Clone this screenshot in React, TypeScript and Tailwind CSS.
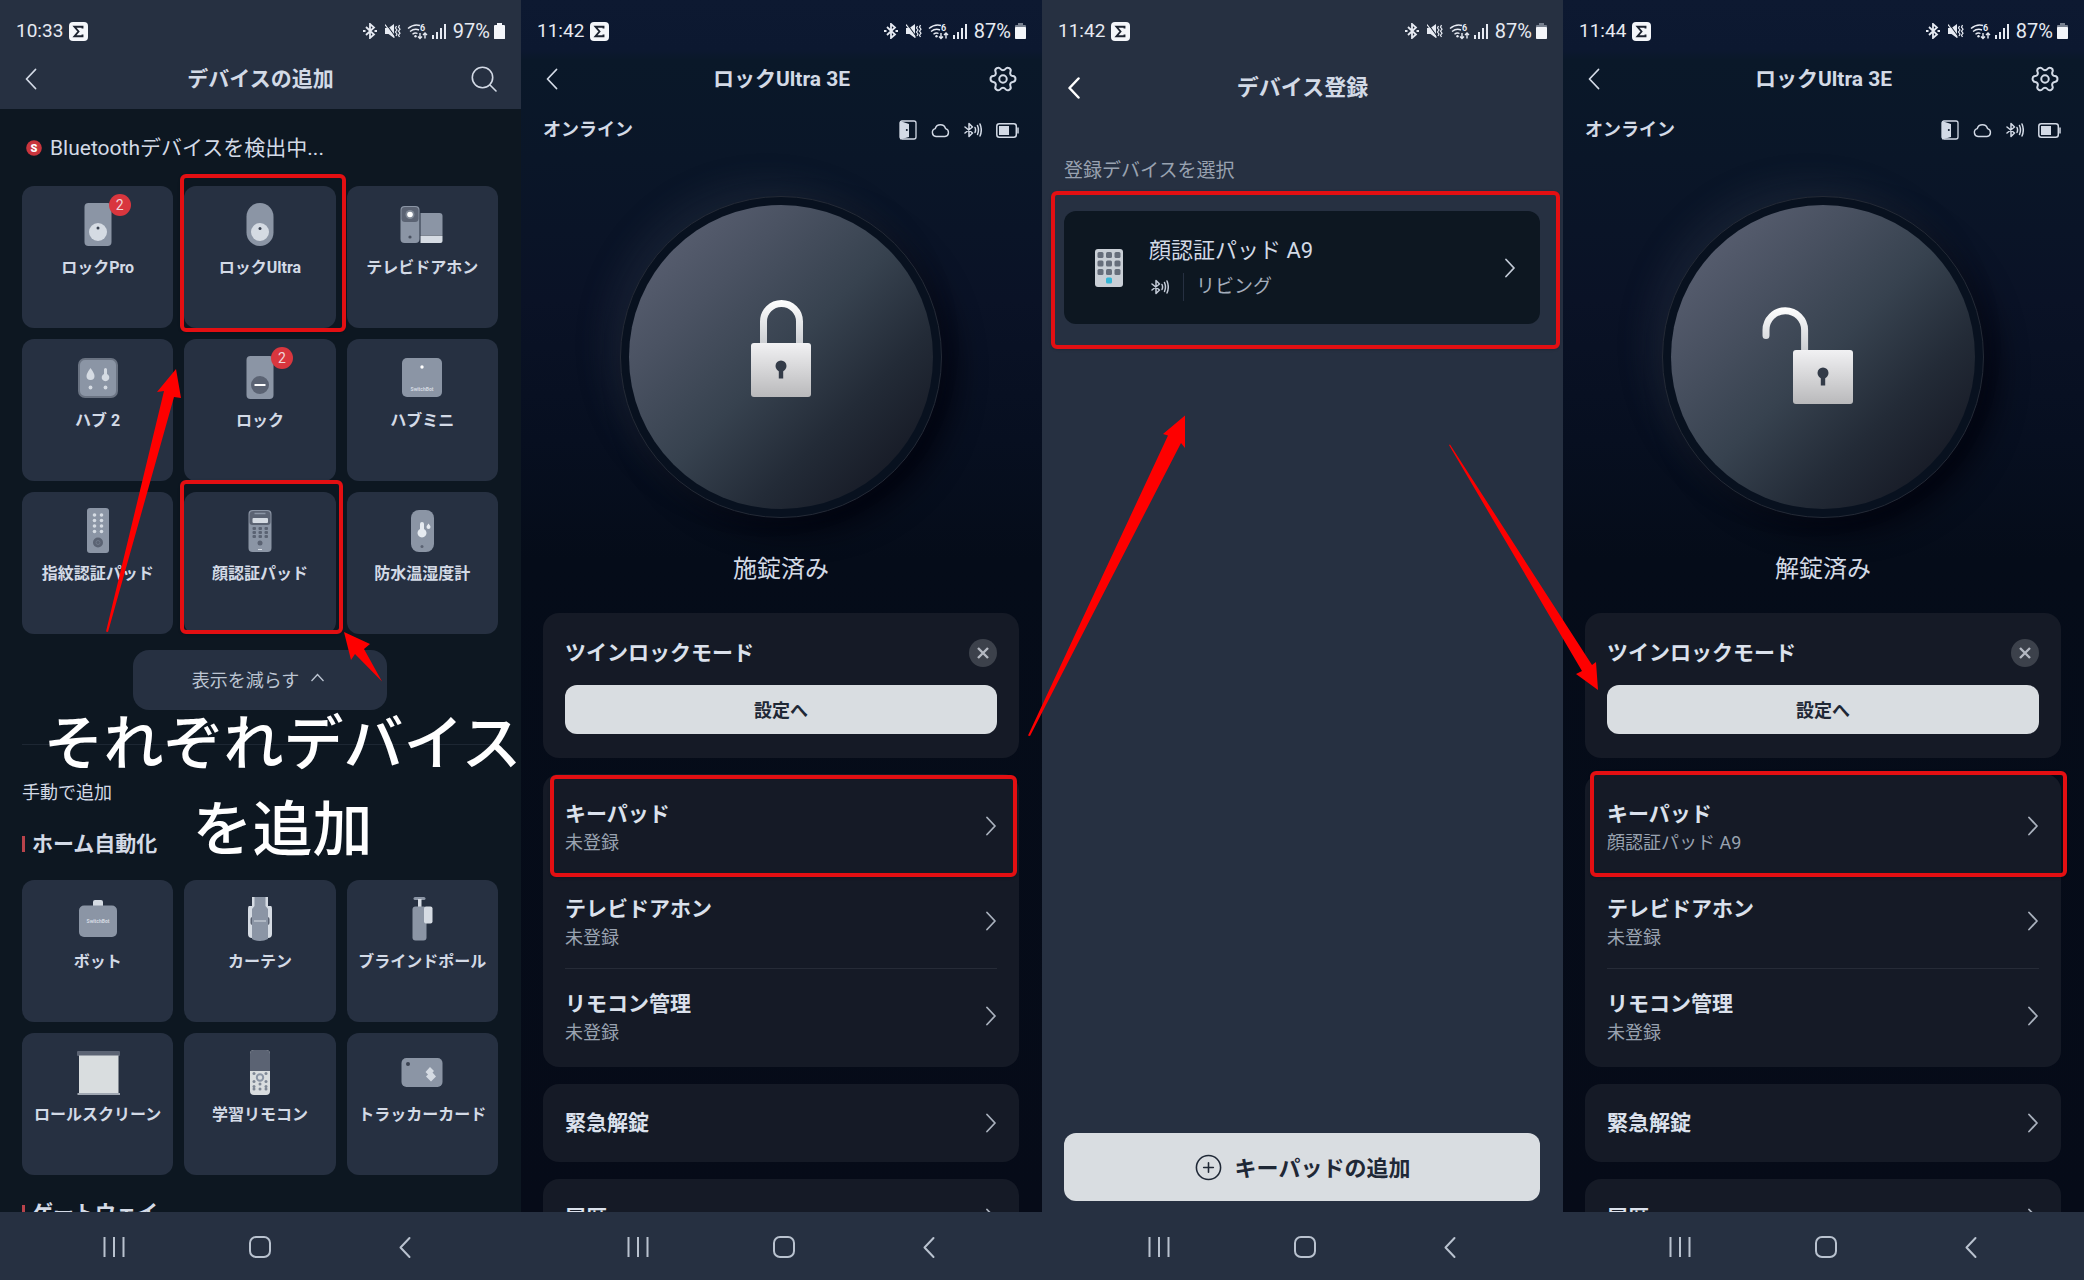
import React from "react";
import clsx from "clsx";
import { CirclePlus, Settings } from "lucide-react";

type IconProps = { className?: string };

const GREY = "#8b95a5";
const LIGHT = "#d5dbe3";
const DARK = "#5b6373";

const Chevron = ({ className }: IconProps) => (
  <svg viewBox="0 0 12 20" fill="none" stroke="currentColor" strokeLinecap="round" strokeLinejoin="round" className={className} aria-hidden="true">
    <path d="M2 1.500l8 8.500-8 8.500" />
  </svg>
);

const ChevronBack = ({ className }: IconProps) => (
  <svg viewBox="0 0 12 22" fill="none" stroke="currentColor" strokeLinecap="round" strokeLinejoin="round" className={className} aria-hidden="true">
    <path d="M10.500 1.500L1.500 11l9 9.500" />
  </svg>
);

const BluetoothWaves = ({ className }: IconProps) => (
  <svg viewBox="0 0 18 16" fill="none" stroke="currentColor" strokeWidth="1.5" strokeLinecap="round" strokeLinejoin="round" className={className} aria-hidden="true">
    <path d="M1 5l7.500 6L5 14.500v-13L8.500 5 1 11M11 5.500c.8 1.700.8 3.300 0 5M13.500 3.500c1.300 3 1.300 6 0 9M16 2c1.700 4 1.700 8 0 12" />
  </svg>
);

const StatusBar = ({ time, battery }: { time: string; battery: number }) => (
  <div className="flex h-[38px] items-center justify-between px-4 text-[20px] leading-6 text-[#e6eaf2]">
    <div className="flex items-center gap-[6px]">
      <span className="text-[19px]">{time}</span>
      <svg viewBox="0 0 19 19" className="h-[19px] w-[19px]" aria-hidden="true">
        <rect width="19" height="19" rx="4" fill="#f4f6fa" />
        <path d="M13.500 6.500V4.800H5.500L9.500 9.500l-4 4.700h8v-1.700" fill="none" stroke="#1c2330" strokeWidth="1.900" />
      </svg>
    </div>
    <div className="flex items-center">
      <svg viewBox="0 0 14 16" className="h-4 w-[14px]" fill="none" stroke="currentColor" strokeWidth="1.800" aria-hidden="true">
        <path d="M3 4l8 7.500L7 15V1l4 3.500L3 12" />
        <path d="M0 8h2.500M11.500 8H14" />
      </svg>
      <svg viewBox="0 0 16 16" className="ml-2 h-4 w-4" fill="currentColor" aria-hidden="true">
        <path d="M0 5h3.500L9 1v14l-5.500-4H0z" />
        <path d="M1 1l10 13.500" stroke="#1e2838" strokeWidth="1.200" />
        <path d="M0 1.500l9.500 13" stroke="currentColor" strokeWidth="1.200" />
        <path d="M11.500 3l-1 2 1.500 2-1.500 2 1.500 2-1 2M14.500 2l-1 2.200 1.500 2-1.500 2 1.500 2-1.500 2 1 1.800" fill="none" stroke="currentColor" strokeWidth="1.200" />
      </svg>
      <svg viewBox="0 0 21 17" className="ml-[6px] h-[17px] w-[21px]" fill="none" stroke="currentColor" strokeWidth="1.400" aria-hidden="true">
        <path d="M1 5.500Q7 .5 13 2.500M3 8.500q4.500-3.500 9-1.500M5.500 11.200q2.500-2 5-.7" />
        <circle cx="8.500" cy="13.200" r="1.200" fill="currentColor" stroke="none" />
        <path d="M13 10v5.500m-2-2l2 2 2-2M18 15.500V10m-2 2l2-2 2 2" />
        <text x="13" y="8" fontSize="9" fontWeight="700" fill="currentColor" stroke="none">6</text>
      </svg>
      <svg viewBox="0 0 15 15" className="ml-1 h-[15px] w-[15px]" fill="currentColor" aria-hidden="true">
        <rect x="0" y="11" width="2" height="4" />
        <rect x="4" y="8" width="2" height="7" />
        <rect x="8" y="4" width="2" height="11" />
        <rect x="12" y="0" width="2" height="15" />
      </svg>
      <span className="ml-[6px]">{battery}%</span>
      <svg viewBox="0 0 11 16" className="ml-1 h-4 w-[11px]" aria-hidden="true">
        <path d="M3 0h5v2h2q1 0 1 1v12q0 1-1 1H1q-1 0-1-1V3q0-1 1-1h2z" fill={battery > 90 ? "#f4f6fa" : "#77808f"} />
        <rect y={battery > 90 ? 3 : 4} width="11" height={battery > 90 ? 13 : 12} rx="1" fill="#f4f6fa" />
      </svg>
    </div>
  </div>
);

const NavBar = ({ className }: IconProps) => (
  <nav className={clsx("z-10 grid h-[68px] shrink-0 grid-cols-[1fr_72px_1fr] items-center bg-[#263041] pt-[2px] text-[#b9c2cf]", className)}>
    <button aria-label="最近" className="ml-auto mr-[99px]">
      <svg viewBox="0 0 22 20" className="h-5 w-[22px]" stroke="currentColor" strokeWidth="2" aria-hidden="true">
        <path d="M1.500 0v20M11 0v20M20.500 0v20" />
      </svg>
    </button>
    <button aria-label="ホーム" className="mx-auto">
      <svg viewBox="0 0 22 22" className="h-[22px] w-[22px]" fill="none" stroke="currentColor" strokeWidth="2" aria-hidden="true">
        <rect x="1" y="1" width="20" height="20" rx="6" />
      </svg>
    </button>
    <button aria-label="戻る" className="ml-[103px] mr-auto">
      <ChevronBack className="h-[23px] w-3 stroke-2" />
    </button>
  </nav>
);

// Red frame drawn over the thing it marks
const Frame = ({ className }: IconProps) => (
  <span className={clsx("pointer-events-none absolute z-20 rounded-md border-4 border-[#e30f12] shadow-sm", className)} />
);

const icons: Record<string, React.ReactNode> = {
  lockPro: (
    <>
      <rect x="10.500" y="3" width="27" height="43" rx="4" fill={GREY} />
      <circle cx="24" cy="32" r="9" fill={LIGHT} />
      <circle cx="24" cy="28" r="1.500" fill="#3b4352" />
    </>
  ),
  lockUltra: (
    <>
      <rect x="10.500" y="3" width="27" height="43" rx="13.500" fill={GREY} />
      <circle cx="24" cy="32" r="9" fill={LIGHT} />
      <circle cx="24" cy="28.500" r="1.500" fill="#3b4352" />
    </>
  ),
  doorphone: (
    <>
      <rect x="2.500" y="6" width="19" height="37" rx="4" fill={GREY} />
      <rect x="3.500" y="7" width="17" height="15" rx="3.500" fill={DARK} />
      <circle cx="12" cy="14.500" r="4.500" fill="#808997" />
      <circle cx="12" cy="14.500" r="2.800" fill="#fff" />
      <circle cx="12" cy="37" r="1.600" fill="#4a5261" />
      <path d="M22.500 13h19q3 0 3 3v19h-22z" fill={GREY} />
      <path d="M22.500 35.500h22V41q0 2-2 2h-20z" fill={LIGHT} />
    </>
  ),
  hub2: (
    <>
      <rect x="5" y="6" width="38" height="38" rx="6" fill={GREY} stroke="#6a7382" strokeWidth="2" />
      <path d="M16.500 15q4 5.500 4 8a4 4 0 0 1-8 0q0-2.500 4-8z" fill={LIGHT} />
      <path d="M30 16.500a1.500 1.500 0 0 1 3 0V21a3.800 3.800 0 1 1-3 0z" fill={LIGHT} />
      <circle cx="16.500" cy="34.500" r="1.900" fill={LIGHT} />
      <circle cx="31.500" cy="34.500" r="1.900" fill={LIGHT} />
    </>
  ),
  lock: (
    <>
      <rect x="10.500" y="3" width="27" height="43" rx="4" fill={GREY} />
      <circle cx="24" cy="32" r="9" fill={DARK} />
      <path d="M18.500 32h11" stroke="#fff" strokeWidth="2" />
    </>
  ),
  hubMini: (
    <>
      <rect x="4" y="5" width="40" height="39" rx="5" fill={GREY} />
      <circle cx="24" cy="14" r="1.700" fill="#fff" />
      <text x="24" y="38" fontSize="5" fontWeight="700" textAnchor="middle" fill={LIGHT}>SwitchBot</text>
    </>
  ),
  fingerPad: (
    <>
      <rect x="13" y="2" width="22" height="45" rx="3" fill={GREY} />
      {[9, 14.5, 20, 25.5].map((y) => (
        <React.Fragment key={y}>
          <circle cx="20.500" cy={y} r="1.800" fill={LIGHT} />
          <circle cx="27.500" cy={y} r="1.800" fill={LIGHT} />
        </React.Fragment>
      ))}
      <circle cx="24" cy="36.500" r="5" fill={DARK} />
      <circle cx="24" cy="36.500" r="2" fill="none" stroke="#6f7888" />
    </>
  ),
  facePad: (
    <>
      <rect x="12.500" y="4" width="23" height="42" rx="4" fill={GREY} />
      <path d="M13.500 9q0-4 4-4h13q4 0 4 4v7q0 3-3 3h-15q-3 0-3-3z" fill={DARK} />
      <path d="M18.500 7.500h11" stroke={GREY} strokeWidth="1.500" />
      <rect x="16.500" y="12" width="15.500" height="5" rx="1" fill={LIGHT} />
      {[22, 26, 30].map((y) => (
        <React.Fragment key={y}>
          <rect x="16.500" y={y - 1} width="3.500" height="3" rx="1" fill={DARK} />
          <rect x="22.500" y={y - 1} width="3.500" height="3" rx="1" fill={DARK} />
          <rect x="28.500" y={y - 1} width="3.500" height="3" rx="1" fill={DARK} />
        </React.Fragment>
      ))}
      <circle cx="24" cy="37" r="2.500" fill={DARK} />
      <path d="M22 43.500h4" stroke={LIGHT} />
    </>
  ),
  thermometer: (
    <>
      <rect x="13" y="4" width="23" height="42" rx="8" fill={GREY} />
      <path d="M22 18a2 2 0 0 1 4 0v5a4.500 4.500 0 1 1-4 0z" fill="#e6ebf1" />
      <path d="M30.500 17.500q2 2.500 2 3.500a2 2 0 0 1-4 0q0-1 2-3.500z" fill="#e6ebf1" />
      <circle cx="24" cy="40.500" r="1.500" fill={DARK} />
    </>
  ),
  bot: (
    <>
      <rect x="19" y="6" width="10" height="9" rx="2" fill={LIGHT} />
      <rect x="5" y="11.500" width="38" height="31.500" rx="5" fill={GREY} />
      <text x="24" y="29" fontSize="5" fontWeight="700" textAnchor="middle" fill={LIGHT}>SwitchBot</text>
    </>
  ),
  curtain: (
    <>
      <path d="M16 3h16v9h3q1 0 1 3v25q0 4-4 4H16q-4 0-4-4V15q0-3 1-3h3z" fill={LIGHT} />
      <rect x="14.500" y="23" width="19" height="8" rx="2" fill={DARK} />
      <path d="M18.500 3h11v9l2.500 3v30q-4 2-8 2t-8-2V15l2.500-3z" fill={GREY} />
      <path d="M18 27h12" stroke={LIGHT} />
    </>
  ),
  blind: (
    <>
      <rect x="15.500" y="3" width="12" height="3" rx="1.500" fill={GREY} />
      <rect x="20" y="5" width="3.500" height="8" fill={LIGHT} />
      <rect x="14.500" y="12.500" width="14" height="34" rx="3" fill={GREY} />
      <rect x="26" y="12.500" width="8.500" height="17" rx="2" fill={LIGHT} />
    </>
  ),
  roller: (
    <>
      <rect x="3" y="4" width="43" height="5" rx="1" fill={DARK} />
      <rect x="5" y="8.500" width="39.500" height="37.500" fill="#d9dddf" />
      <path d="M3.500 47H46" stroke="#a0a7b2" strokeWidth="2" />
    </>
  ),
  remote: (
    <>
      <rect x="14" y="3" width="20" height="45" rx="4" fill="#d9dddf" />
      <path d="M14 24V7q0-4 4-4h12q4 0 4 4v17z" fill={DARK} />
      <circle cx="24" cy="30.500" r="3.200" fill="none" stroke={GREY} strokeWidth="2" />
      {[
        [18, 26.5], [30, 26.5], [18, 34.5], [30, 34.5], [24, 37],
        [18, 39.5], [30, 39.5], [18, 42], [24, 42], [30, 42],
      ].map(([x, y]) => (
        <circle key={`${x}-${y}`} cx={x} cy={y} r="1.500" fill="#7e8795" />
      ))}
    </>
  ),
  tracker: (
    <>
      <rect x="3.500" y="11" width="41" height="29" rx="5" fill={GREY} />
      <circle cx="10" cy="17" r="2" fill="#3b4352" />
      <path d="M32 20l4 4-1.500 1.500 3.500 4-5 5-5-5 2-2-2.500-2.500z" fill={LIGHT} />
    </>
  ),
};

type Device = { icon: string; name: string; badge?: number; frame?: string };

const foundDevices: Device[] = [
  { icon: "lockPro", name: "ロックPro", badge: 2 },
  { icon: "lockUltra", name: "ロックUltra", frame: "-top-3 -bottom-1 -left-1 -right-[10px]" },
  { icon: "doorphone", name: "テレビドアホン" },
  { icon: "hub2", name: "ハブ 2" },
  { icon: "lock", name: "ロック", badge: 2 },
  { icon: "hubMini", name: "ハブミニ" },
  { icon: "fingerPad", name: "指紋認証パッド" },
  { icon: "facePad", name: "顔認証パッド", frame: "-top-3 bottom-0 -left-1 -right-[7px]" },
  { icon: "thermometer", name: "防水温湿度計" },
];

const homeDevices: Device[] = [
  { icon: "bot", name: "ボット" },
  { icon: "curtain", name: "カーテン" },
  { icon: "blind", name: "ブラインドポール" },
  { icon: "roller", name: "ロールスクリーン" },
  { icon: "remote", name: "学習リモコン" },
  { icon: "tracker", name: "トラッカーカード" },
];

const DeviceGrid = ({ devices }: { devices: Device[] }) => (
  <ul className="grid grid-cols-3 gap-[11px]">
    {devices.map((device) => (
      <li key={device.name} className="relative">
        <button className="flex h-[142px] w-full flex-col items-center rounded-xl bg-[#263041] pt-[14px]">
          <span className="relative">
            <svg viewBox="0 0 48 48" className="h-12 w-12" aria-hidden="true">
              {icons[device.icon]}
            </svg>
            {device.badge && (
              <span className="absolute -top-[6px] left-[35px] flex h-[22px] w-[22px] items-center justify-center rounded-full bg-[#d9363e] text-[14px] text-[#f0d5da]">
                {device.badge}
              </span>
            )}
          </span>
          <span className="mt-2 text-[16px] leading-6 font-bold whitespace-nowrap text-[#d3dae6]">{device.name}</span>
        </button>
        {device.frame && <Frame className={device.frame} />}
      </li>
    ))}
  </ul>
);

const SectionTitle = ({ children }: { children: React.ReactNode }) => (
  <h3 className="flex items-center gap-[7px] text-[21px] leading-6 font-bold text-[#d3dae6]">
    <span className="h-4 w-[3px] bg-[#b8434b]" />
    {children}
  </h3>
);

const AddDeviceScreen = () => (
  <section className="relative flex h-screen min-w-0 flex-col bg-[#0d1721]">
    <header className="bg-[#263041] pt-3 pb-px">
      <StatusBar time="10:33" battery={97} />
      <div className="grid h-[58px] grid-cols-[1fr_auto_1fr] items-center px-6 text-[#d3dae6]">
        <button aria-label="戻る" className="mr-auto pl-px">
          <ChevronBack className="h-[22px] w-3 stroke-[1.800px]" />
        </button>
        <h1 className="text-[21px] leading-8 font-bold">デバイスの追加</h1>
        <button aria-label="検索" className="ml-auto">
          <svg viewBox="0 0 26 26" className="h-[26px] w-[26px]" fill="none" stroke="currentColor" strokeWidth="1.600" strokeLinecap="round" aria-hidden="true">
            <circle cx="11.500" cy="11.500" r="10.200" />
            <path d="M19 19l6 6" />
          </svg>
        </button>
      </div>
    </header>
    <div className="min-h-0 flex-1 overflow-hidden pr-[23px] pl-[22px]">
      <div className="flex h-[77px] items-center gap-2 pl-1">
        <svg viewBox="0 0 16 16" className="h-4 w-4" aria-hidden="true">
          <circle cx="8" cy="8" r="7.800" fill="#c9353d" />
          <text x="8" y="11.800" fontSize="11" fontWeight="900" textAnchor="middle" fill="#fff">S</text>
        </svg>
        <h2 className="text-[21px] leading-8 text-[#d3dae6]">Bluetoothデバイスを検出中...</h2>
      </div>
      <DeviceGrid devices={foundDevices} />
      <button className="mx-auto mt-4 flex h-[60px] w-[254px] items-center justify-center gap-3 rounded-2xl bg-[#263041] pt-px pr-1 text-[18px] text-[#bcc5d2]">
        表示を減らす
        <svg viewBox="0 0 13 9" className="mb-[6px] h-[9px] w-[13px]" fill="none" stroke="currentColor" strokeWidth="1.300" aria-hidden="true">
          <path d="M.5 8l6-6.500 6 6.500" />
        </svg>
      </button>
      <hr className="mt-[34px] border-[#1d2733]" />
      <p className="mt-9 text-[18px] leading-6 text-[#d3dae6]">手動で追加</p>
      <div className="mt-[27px] mb-6">
        <SectionTitle>ホーム自動化</SectionTitle>
      </div>
      <DeviceGrid devices={homeDevices} />
      <div className="mt-[26px]">
        <SectionTitle>ゲートウェイ</SectionTitle>
      </div>
    </div>
    <NavBar className="pr-[2px]" />
    <p className="pointer-events-none absolute top-[702px] left-[calc(50%+22px)] z-30 -translate-x-1/2 text-center text-[60px] leading-[86px] font-medium whitespace-nowrap text-white">
      それぞれデバイス
      <br />
      を追加
    </p>
  </section>
);

const Padlock = ({ open }: { open: boolean }) => (
  <svg viewBox="0 3 100 108" className="h-[108px] w-[100px] overflow-visible" aria-hidden="true">
    <defs>
      <linearGradient id="lockBody" x1="0" y1="0" x2="0" y2="1">
        <stop offset="0" stopColor="#f1f1f3" />
        <stop offset="1" stopColor="#b9b9bb" />
      </linearGradient>
      <linearGradient id="shackle" x1="0" y1="0" x2="0" y2="50" gradientUnits="userSpaceOnUse">
        <stop offset="0" stopColor="#fff" />
        <stop offset="1" stopColor="#c4c7cc" />
      </linearGradient>
    </defs>
    <g transform={open ? "translate(0 7)" : undefined}>
      {open ? (
        <path d="M-7 28.500v-5.500a19.300 19.300 0 0 1 38.600 0v23" fill="none" stroke="url(#shackle)" strokeWidth="7" strokeLinecap="round" />
      ) : (
        <path d="M32.500 46V21.500a18 18 0 0 1 36 0V46" fill="none" stroke="url(#shackle)" strokeWidth="7" />
      )}
      <rect x="20" y="43" width="60" height="54" rx="3" fill="url(#lockBody)" />
      <circle cx="50" cy="66" r="5.500" fill="#333b48" />
      <rect x="47.800" y="67" width="4.400" height="11.500" fill="#333b48" />
    </g>
  </svg>
);

type LockRow = { title: string; sub: string; frame?: string };

const LockScreen = ({ time, state, open, rows }: { time: string; state: string; open: boolean; rows: LockRow[] }) => (
  <section className="flex h-screen min-w-0 flex-col bg-[linear-gradient(180deg,#0d1931_0px,#0c1830_50px,#0a1829_60px,#0a1628_160px,#0a1226_300px,#070f20_440px,#050c19_560px,#060b18_1212px)]">
    <div className="pt-3">
      <StatusBar time={time} battery={87} />
    </div>
    <header className="grid h-[58px] grid-cols-[1fr_auto_1fr] items-center px-6 text-[#d3dae6]">
      <button aria-label="戻る" className="mr-auto pl-px">
        <ChevronBack className="h-[22px] w-3 stroke-[1.800px]" />
      </button>
      <h1 className="text-[21px] leading-8 font-bold">ロックUltra 3E</h1>
      <button aria-label="設定" className="ml-auto">
        <Settings size={30} strokeWidth={1.6} className="rotate-90" />
      </button>
    </header>
    <div className="min-h-0 flex-1 overflow-hidden pr-[23px] pl-[22px]">
      <div className="flex h-11 items-center justify-between text-[#d3dae6]">
        <span className="text-[18px] leading-6 font-bold">オンライン</span>
        <div className="flex items-center gap-[14px]">
          <svg viewBox="0 0 18 20" className="h-5 w-[18px]" aria-hidden="true">
            <rect x="1" y="1" width="16" height="18" rx="2" fill="none" stroke="currentColor" strokeWidth="1.300" />
            <path d="M1 1l9 3v13l-9 2.500z" fill="currentColor" />
            <circle cx="7.800" cy="10" r="1" fill="#0a1628" />
          </svg>
          <svg viewBox="0 0 19 16" className="h-4 w-[19px]" fill="none" stroke="currentColor" strokeWidth="1.400" aria-hidden="true">
            <path d="M5 14.500a4 4 0 0 1-.8-7.800 5.400 5.400 0 0 1 10.400 0A4 4 0 0 1 14 14.500z" />
          </svg>
          <BluetoothWaves className="h-4 w-[18px]" />
          <svg viewBox="0 0 23 15" className="h-[15px] w-[23px]" fill="none" stroke="currentColor" strokeWidth="1.500" aria-hidden="true">
            <rect x=".8" y=".8" width="19.500" height="13.400" rx="2.500" />
            <path d="M22 4.500v6" />
            <rect x="3" y="3" width="10" height="9" fill="currentColor" stroke="none" />
          </svg>
        </div>
      </div>
      <button
        aria-label={state}
        className="mx-auto mt-11 flex h-[322px] w-[322px] items-center justify-center rounded-full border border-[#242a36] bg-[#08111f] shadow-[-14px_-12px_30px_rgba(50,58,76,0.3),14px_14px_28px_rgba(0,2,10,0.7)]"
      >
        <span className="flex h-[304px] w-[304px] items-center justify-center rounded-full bg-[linear-gradient(135deg,#5a6072_8%,#4a5262_28%,#37424f_50%,#232b37_70%,#141722_92%)]">
          <Padlock open={open} />
        </span>
      </button>
      <p className="mt-[35px] text-center text-[24px] leading-8 text-[#d3dae6]">{state}</p>
      <div className="mt-7 rounded-2xl bg-[#151a26] px-[22px] py-6">
        <div className="flex h-8 items-center justify-between">
          <h2 className="text-[21px] leading-8 font-bold text-[#dbe1ec]">ツインロックモード</h2>
          <button aria-label="閉じる" className="flex h-7 w-7 items-center justify-center rounded-full bg-[#3c414b] text-[#b4b9c2]">
            <svg viewBox="0 0 12 12" className="h-3 w-3" stroke="currentColor" strokeWidth="2.400" aria-hidden="true">
              <path d="M1 1l10 10M11 1L1 11" />
            </svg>
          </button>
        </div>
        <button className="mt-4 h-[49px] w-full rounded-xl bg-[#d9dde1] pt-[2px] text-[18px] font-bold text-[#1f2836]">設定へ</button>
      </div>
      <ul className="mt-4 rounded-2xl bg-[#151a26] px-[22px] py-1">
        {rows.map((row, index) => (
          <li key={row.title} className="relative">
            <a href="#" className={clsx("flex h-[95px] items-center justify-between", index > 0 && "border-t border-[#262b37]")}>
              <span className="pt-1">
                <span className="block text-[21px] leading-[30px] font-bold text-[#dbe1ec]">{row.title}</span>
                <span className="block text-[18px] leading-7 text-[#99a2b0]">{row.sub}</span>
              </span>
              <Chevron className="h-5 w-3 stroke-[1.800px] text-[#a9b1bd]" />
            </a>
            {row.frame && <Frame className={row.frame} />}
          </li>
        ))}
      </ul>
      {["緊急解錠", "履歴"].map((title) => (
        <a key={title} href="#" className="mt-[17px] flex h-[78px] items-center justify-between rounded-2xl bg-[#151a26] px-[22px]">
          <span className="text-[21px] leading-8 font-bold text-[#dbe1ec]">{title}</span>
          <Chevron className="h-5 w-3 stroke-[1.800px] text-[#a9b1bd]" />
        </a>
      ))}
    </div>
    <NavBar className="pl-1" />
  </section>
);

const RegisterScreen = () => (
  <section className="flex h-screen min-w-0 flex-col bg-[#263041]">
    <div className="pt-3">
      <StatusBar time="11:42" battery={87} />
    </div>
    <header className="grid h-[76px] grid-cols-[1fr_auto_1fr] items-center px-6 text-[#d3dae6]">
      <button aria-label="戻る" className="mr-auto pl-[2px] text-white">
        <ChevronBack className="h-[22px] w-3 stroke-[2.500px]" />
      </button>
      <h1 className="text-[22px] leading-8 font-bold">デバイス登録</h1>
    </header>
    <div className="flex min-h-0 flex-1 flex-col pr-[23px] pb-[11px] pl-[22px]">
      <p className="mt-[31px] text-[19px] leading-7 text-[#99a2b0]">登録デバイスを選択</p>
      <div className="relative mt-[26px]">
        <a href="#" className="flex h-[113px] items-center rounded-xl bg-[#0d1721] pr-6 pl-[31px]">
          <svg viewBox="0 0 28 38" className="h-[38px] w-7" aria-hidden="true">
            <rect width="28" height="38" rx="3" fill="#c9cfd6" />
            {[2.5, 11, 19.5].map((x) =>
              [3, 11.5, 20].map((y) => <rect key={`${x}-${y}`} x={x} y={y} width="6" height="6" rx="1.500" fill="#666e7b" />)
            )}
            <rect x="11" y="28.500" width="6" height="6" rx="1.500" fill="#35b5d4" />
          </svg>
          <span className="ml-[26px]">
            <span className="block text-[22px] leading-8 text-[#d3dae6]">顔認証パッド A9</span>
            <span className="mt-[6px] flex items-center text-[#c3cbd7]">
              <BluetoothWaves className="ml-[2px] h-4 w-[18px]" />
              <span className="mr-3 ml-[14px] h-7 w-px bg-[#263041]" />
              <span className="text-[19px] leading-7 text-[#a3adbb]">リビング</span>
            </span>
          </span>
          <Chevron className="ml-auto h-5 w-3 stroke-[1.800px] text-[#c3cbd7]" />
        </a>
        <Frame className="-top-5 -right-5 -bottom-[25px] -left-[13px]" />
      </div>
      <button className="mt-auto flex h-[68px] items-center justify-center gap-3 rounded-xl bg-[#d9dde1] text-[22px] font-bold text-[#1f2836]">
        <CirclePlus size={29} strokeWidth={1.3} />
        <span className="pt-[2px]">キーパッドの追加</span>
      </button>
    </div>
    <NavBar className="pl-1" />
  </section>
);

const baseRows: LockRow[] = [
  { title: "テレビドアホン", sub: "未登録" },
  { title: "リモコン管理", sub: "未登録" },
];

const App = () => {
  return (
    <main className="relative grid h-screen grid-cols-4 overflow-hidden bg-[#0d1721] font-[Roboto,'Noto_Sans_CJK_JP',sans-serif]">
      <AddDeviceScreen />
      <LockScreen
        time="11:42"
        state="施錠済み"
        open={false}
        rows={[{ title: "キーパッド", sub: "未登録", frame: "-top-[3px] -bottom-1 -left-[15px] -right-5" }, ...baseRows]}
      />
      <RegisterScreen />
      <LockScreen
        time="11:44"
        state="解錠済み"
        open
        rows={[{ title: "キーパッド", sub: "顔認証パッド A9", frame: "-top-[7px] -bottom-1 -left-[17px] -right-7" }, ...baseRows]}
      />
      <svg viewBox="0 0 2084 1280" preserveAspectRatio="none" className="pointer-events-none absolute inset-0 z-20 h-full w-full" fill="#fe0000" aria-hidden="true">
        <path d="M176 369L157 392l7-1L106 631.500l2 .5L174 397l7 1z" />
        <path d="M344 632l7 28 4-6L382 681.500 364 649l6-5z" />
        <path d="M1185 415.500l-22 18.500 5 1.500L1028 735.500l2 .5 151-293 4 5z" />
        <path d="M1598 690l-22-16 6-3L1449 445l1-.5L1592 665l4-3z" />
      </svg>
    </main>
  );
};

export default App;
